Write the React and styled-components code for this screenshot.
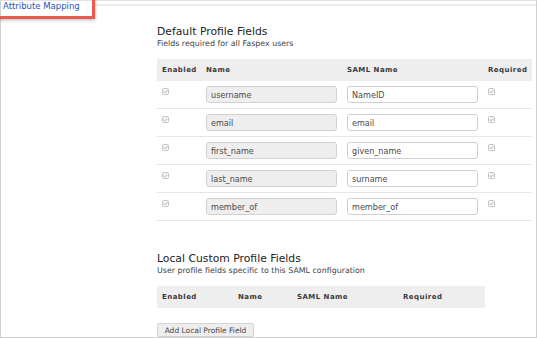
import React from 'react';
import styled, { createGlobalStyle } from 'styled-components';

const GlobalStyle = createGlobalStyle`
  html, body {
    margin: 0;
    padding: 0;
    background: #fff;
  }
  body {
    font-family: "DejaVu Sans", Verdana, sans-serif;
    color: #333;
  }
`;

const defaultFields = [
  { name: 'username', saml: 'NameID' },
  { name: 'email', saml: 'email' },
  { name: 'first_name', saml: 'given_name' },
  { name: 'last_name', saml: 'surname' },
  { name: 'member_of', saml: 'member_of' },
];

const Check = () => (
  <CheckBox viewBox="0 0 7 7" width="7" height="7">
    <rect x="0.5" y="0.5" width="6" height="6" rx="1" fill="#f6f6f6" stroke="#c4c4c4" />
    <path d="M1.8 3.6 L3 4.8 L5.2 2.2" fill="none" stroke="#a8a8a8" strokeWidth="0.9" />
  </CheckBox>
);

const App = () => {
  return (
    <>
      <GlobalStyle />
      <Frame>
        <TopBar>
          <TabLabel>Attribute Mapping</TabLabel>
          <TopLine />
          <Highlight />
        </TopBar>
        <Content>
          <Section>
            <Heading>Default Profile Fields</Heading>
            <SubText>Fields required for all Faspex users</SubText>
            <DefaultTable>
              <HeadRow $cols="44px 141px 141px 1fr">
                <HeadCell>Enabled</HeadCell>
                <HeadCell>Name</HeadCell>
                <HeadCell>SAML Name</HeadCell>
                <HeadCell>Required</HeadCell>
              </HeadRow>
              {defaultFields.map(f => (
                <BodyRow key={f.name}>
                  <CheckCell><Check /></CheckCell>
                  <Cell><Field readOnly $locked value={f.name} /></Cell>
                  <Cell><Field readOnly value={f.saml} /></Cell>
                  <CheckCell><Check /></CheckCell>
                </BodyRow>
              ))}
            </DefaultTable>
          </Section>
          <Section $gap>
            <Heading>Local Custom Profile Fields</Heading>
            <SubText>User profile fields specific to this SAML configuration</SubText>
            <LocalTable>
              <HeadRow $cols="76px 59px 106px 1fr">
                <HeadCell>Enabled</HeadCell>
                <HeadCell>Name</HeadCell>
                <HeadCell>SAML Name</HeadCell>
                <HeadCell>Required</HeadCell>
              </HeadRow>
            </LocalTable>
            <AddButton>Add Local Profile Field</AddButton>
          </Section>
        </Content>
      </Frame>
    </>
  );
};

export default App;

const Frame = styled.div`
  width: 535px;
  height: 336px;
  border-left: 1px solid #d0d0d0;
  border-right: 1px solid #d0d0d0;
  border-bottom: 1px solid #d0d0d0;
  border-top: 1px solid #e2e2e2;
  display: flex;
  flex-direction: column;
`;

const TopBar = styled.div`
  position: relative;
  display: flex;
  align-items: flex-start;
  height: 14px;
`;

const TabLabel = styled.div`
  font-size: 8.5px;
  line-height: 11px;
  color: #2a52be;
  padding-left: 2px;
  width: 92px;
  white-space: nowrap;
`;

const TopLine = styled.div`
  flex: 1;
  margin-top: 3px;
  height: 2px;
  background: #ededed;
`;

const Highlight = styled.div`
  position: absolute;
  left: -4px;
  top: -4px;
  width: 92px;
  height: 16px;
  border: 3px solid #ec5a4f;
  box-shadow: 0 1px 3px rgba(0, 0, 0, 0.3);
  pointer-events: none;
`;

const Content = styled.div`
  padding: 11px 3px 0 156px;
`;

const Section = styled.div`
  margin-top: ${p => (p.$gap ? '31px' : '0')};
`;

const Heading = styled.h2`
  margin: 0;
  font-weight: normal;
  font-size: 10.8px;
  line-height: 14px;
  color: #222;
`;

const SubText = styled.div`
  font-size: 7.9px;
  line-height: 10px;
  color: #444;
  margin-bottom: 10px;
`;

const DefaultTable = styled.div`
  width: 375px;
`;

const LocalTable = styled.div`
  width: 328px;
`;

const HeadRow = styled.div`
  display: grid;
  grid-template-columns: ${p => p.$cols};
  height: 22px;
  align-items: center;
  background: #eeeeee;
`;

const HeadCell = styled.div`
  padding-left: 5px;
  font-size: 7px;
  font-weight: bold;
  letter-spacing: 0.45px;
  color: #3a3a3a;
  white-space: nowrap;
`;

const BodyRow = styled.div`
  display: grid;
  grid-template-columns: 44px 141px 141px 1fr;
  height: 27px;
  border-bottom: 1px solid #e6e6e6;
  align-items: center;
`;

const Cell = styled.div`
  padding-left: 5px;
  display: flex;
  align-items: center;
`;

const CheckCell = styled.div`
  padding-left: 5px;
  align-self: start;
  padding-top: 7px;
  display: flex;
`;

const CheckBox = styled.svg`
  display: block;
`;

const Field = styled.input`
  box-sizing: border-box;
  width: 131px;
  height: 17px;
  padding: 0 4px;
  margin: 0;
  border: 1px solid ${p => (p.$locked ? '#d2d2d2' : '#cfcfcf')};
  border-radius: 3px;
  background: ${p => (p.$locked ? '#eeeeee' : '#ffffff')};
  font-family: "DejaVu Sans", Verdana, sans-serif;
  font-size: 8.1px;
  color: #4a4a4a;
  outline: none;
`;

const AddButton = styled.button`
  margin-top: 15px;
  box-sizing: border-box;
  width: 97px;
  height: 14px;
  padding: 0;
  border: 1px solid #d4d4d4;
  border-radius: 2px;
  background: #eeeeee;
  font-family: "DejaVu Sans", Verdana, sans-serif;
  font-size: 7.5px;
  color: #444;
  white-space: nowrap;
`;
